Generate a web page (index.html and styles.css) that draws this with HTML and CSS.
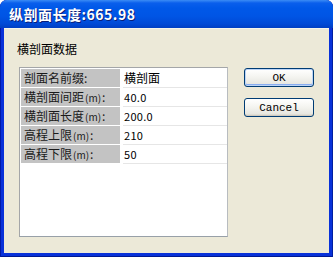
FILE: index.html
```html
<!DOCTYPE html>
<html lang="zh-CN">
<head>
  <meta charset="UTF-8">
  <title>纵剖面长度</title>
  <link rel="stylesheet" href="styles.css">
</head>
<body>

<div class="window">
  <div class="titlebar">
    <span class="title">纵剖面长度:665.98</span>
  </div>
  <div class="client">
    <div class="panel">
      <div class="group-label">横剖面数据</div>
      <div class="grid">
        <div class="row"><div class="key">剖面名前缀:</div><div class="val">横剖面</div></div>
        <div class="row"><div class="key">横剖面间距<small>(m)</small>:</div><div class="val num">40.0</div></div>
        <div class="row"><div class="key">横剖面长度<small>(m)</small>:</div><div class="val num">200.0</div></div>
        <div class="row"><div class="key">高程上限<small>(m)</small>:</div><div class="val num">210</div></div>
        <div class="row"><div class="key">高程下限<small>(m)</small>:</div><div class="val num">50</div></div>
      </div>
    </div>
    <div class="buttons">
      <button class="btn btn-default">OK</button>
      <button class="btn">Cancel</button>
    </div>
  </div>
</div>

</body>
</html>
```

FILE: styles.css
```css
html, body {
  margin: 0;
  padding: 0;
}

body {
  width: 333px;
  height: 257px;
  overflow: hidden;
  font-family: "Noto Sans CJK SC", "Noto Sans", sans-serif;
  font-size: 12px;
}

.window {
  width: 333px;
  height: 257px;
  display: flex;
  flex-direction: column;
  background: #0831d9;
  border-radius: 7px 7px 0 0;
  box-sizing: border-box;
  box-shadow: inset 1px 0 0 #0019a8, inset -1px 0 0 #001ea0, inset 0 -1px 0 #001890;
}

.titlebar {
  height: 28px;
  display: flex;
  align-items: center;
  padding-left: 9px;
  border-radius: 7px 7px 0 0;
  background: linear-gradient(to bottom, #3b8cf5 0px, #0a5fec 3px, #0058e8 8px, #0055e5 16px, #0049d6 24px, #003fc2 28px);
}

.title {
  color: #fff;
  font-weight: bold;
  font-size: 14px;
  letter-spacing: 0.5px;
  text-shadow: 1px 1px 0 #0a1e78;
}

.client {
  flex: 1;
  margin: 0 4px 4px 4px;
  background: #ece9d8;
  display: flex;
  padding: 0 0 0 15px;
  box-shadow: inset 0 1px 0 #f6f4ea;
}

.panel {
  width: 209px;
}

.group-label {
  margin-top: 13px;
  height: 16px;
  line-height: 16px;
  margin-bottom: 10px;
  margin-left: -2px;
  color: #000;
}

.grid {
  height: 170px;
  box-sizing: border-box;
  border: 1px solid #a4a6a8;
  border-right-color: #b8bcc0;
  border-bottom-color: #98a0a8;
  background: #fff;
  padding: 1px 0 0 1px;
}

.row {
  display: grid;
  grid-template-columns: 99px 1fr;
  column-gap: 3px;
  height: 19px;
}

.key {
  background: #c3c3c3;
  height: 18px;
  line-height: 18px;
  padding-left: 3px;
  color: #1a1a1a;
  white-space: nowrap;
}

.key small {
  font-size: 10px;
  padding: 0 1px;
}

.val {
  height: 18px;
  line-height: 18px;
  border-bottom: 1px solid #e6e6e6;
  padding-left: 1px;
  color: #000;
}

.num {
  font-size: 11px;
  letter-spacing: 0.3px;
}

.buttons {
  margin-left: 16px;
  padding-top: 40px;
  display: flex;
  flex-direction: column;
  gap: 11px;
}

.btn {
  width: 70px;
  height: 19px;
  padding: 0;
  border: 1px solid #003c74;
  border-radius: 3px;
  background: linear-gradient(to bottom, #ffffff 0%, #f6f6f2 40%, #e8e8e2 85%, #d6d0c5 100%);
  font-family: "Liberation Mono", monospace;
  font-size: 11px;
  color: #000;
  box-shadow: inset 0 -1px 0 #d0cbc0;
}

.btn-default {
  box-shadow: inset 0 0 0 1px #bcd4f6, inset 0 -1px 0 1px #89adf0;
}
```
